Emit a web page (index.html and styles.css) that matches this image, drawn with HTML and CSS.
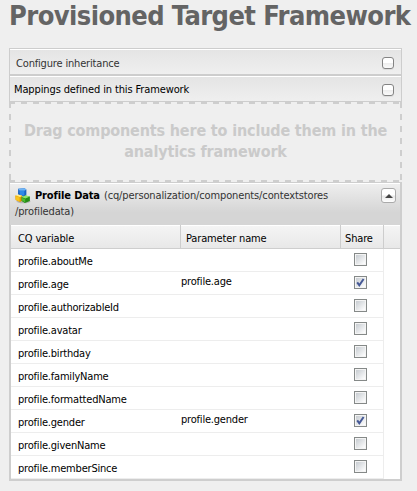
FILE: index.html
```html
<!DOCTYPE html>
<html lang="en">
<head>
<meta charset="utf-8">
<title>Provisioned Target Framework</title>
<link rel="stylesheet" href="styles.css">
</head>
<body>
<h1>Provisioned Target Framework</h1>
<main class="stack">
  <section class="bar inherit"><span>Configure inheritance</span><i class="toggle"></i></section>
  <section class="bar mappings"><span>Mappings defined in this Framework</span><i class="toggle"></i></section>
  <section class="drop">
    <svg class="dashes" width="393" height="80" fill="none" stroke="#cecece" stroke-width="2">
      <path d="M0 1H393" stroke-dasharray="6 6"/>
      <path d="M0 79H393" stroke-dasharray="6 6"/>
      <path d="M1 0V80M392 0V80" stroke-dasharray="6 6"/>
    </svg>
    <p>Drag components here to include them in the<br>analytics framework</p>
  </section>
  <section class="panel">
    <header>
      <svg class="cubes" width="16" height="16" viewBox="0 0 16 16">
        <ellipse cx="8.5" cy="13.3" rx="7" ry="2" fill="#999" opacity=".6"/>
        <path d="M3.2.8 9.5.3l1.9 1.1v5.4L9.8 8H5L3 6z" fill="#1763c4"/>
        <path d="M3.2.8 9.5.3l1.9 1.1-2 1.3H4.7z" fill="#70b5f6"/>
        <path d="M4.4 2.7h5v4.9H5z" fill="#2f8ae8"/>
        <path d="M.3 7.4 4 6.7l3.2 1v5L5 13.9.6 12z" fill="#e39a05"/>
        <path d="M.3 7.4 4 6.7l3.2 1L5 9z" fill="#fff08a"/>
        <path d="M.5 8 4.6 9.2v4.2L.8 11.7z" fill="#f8c51c"/>
        <path d="m6.5 9.1 4-1.5 4.4 1v4.3L9.9 15l-3.3-2.1z" fill="#258c17"/>
        <path d="m6.5 9.1 4-1.5 4.4 1-4.5 2z" fill="#91e469"/>
        <path d="m6.8 9.7 3.4 1.3v3.4l-3.3-2z" fill="#4dba32"/>
      </svg>
      <p><b>Profile Data</b><span>(cq/personalization/components/contextstores</span><br><span class="path2">/profiledata)</span></p>
      <i class="collapse"></i>
    </header>
    <div class="columns"><span>CQ variable</span><span class="c2">Parameter name</span><span class="c3">Share</span></div>
    <div class="rows">
      <div class="row"><span>profile.aboutMe</span><em></em><i class="check"></i></div>
      <div class="row"><span>profile.age</span><em>profile.age</em><i class="check"><svg viewBox="0 0 9 9"><path d="M1.2 4.4 3.3 7.2 7.6 1"/></svg></i></div>
      <div class="row"><span>profile.authorizableId</span><em></em><i class="check"></i></div>
      <div class="row"><span>profile.avatar</span><em></em><i class="check"></i></div>
      <div class="row"><span>profile.birthday</span><em></em><i class="check"></i></div>
      <div class="row"><span>profile.familyName</span><em></em><i class="check"></i></div>
      <div class="row"><span>profile.formattedName</span><em></em><i class="check"></i></div>
      <div class="row"><span>profile.gender</span><em>profile.gender</em><i class="check"><svg viewBox="0 0 9 9"><path d="M1.2 4.4 3.3 7.2 7.6 1"/></svg></i></div>
      <div class="row"><span>profile.givenName</span><em></em><i class="check"></i></div>
      <div class="row"><span>profile.memberSince</span><em></em><i class="check"></i></div>
    </div>
  </section>
</main>
</body>
</html>
```
FILE: styles.css
```css
* { box-sizing: border-box; }
body { margin: 0; width: 417px; height: 491px; overflow: hidden; background: #efefef; color: #000; font: 11px "DejaVu Sans Condensed", "DejaVu Sans", sans-serif; font-stretch: condensed; }
h1 { margin: 0 0 0 9px; height: 48px; font-size: 27px; line-height: 31px; letter-spacing: -.57px; color: #646464; white-space: nowrap; }
.stack { width: 393px; margin-left: 9px; white-space: nowrap; }
.bar { display: flex; justify-content: space-between; border: 1px solid #cdcdcd; box-shadow: inset 0 1px #fff; background: linear-gradient(#e4e4e4, #efefef); padding: 0 6px; }
.inherit { height: 28px; border-bottom-width: 2px; color: #333; line-height: 29px; letter-spacing: -.17px; }
.mappings { height: 26px; border-top: 0; padding-left: 4px; line-height: 28px; letter-spacing: -.12px; }
.toggle { width: 12px; height: 12px; margin: 8px 1px 0; border: 1px solid #848484; border-radius: 3px; background: linear-gradient(#fff 45%, #eee 55%, #fafafa); box-shadow: 0 1px #ddd; }
.drop { position: relative; height: 80px; padding-top: 18px; text-align: center; color: #cacaca; font-size: 16px; font-weight: bold; line-height: 21px; letter-spacing: -.16px; }
.dashes { position: absolute; inset: 0; }
p { margin: 0; }
.panel { height: 299px; border: solid #cecece; border-width: 1px 2px 2px 1px; background: #fff; }
header { display: flex; height: 42px; padding: 4px 4px 0 5px; background: linear-gradient(#efefef, #d5d5d5 70%, #d5d5d5); box-shadow: inset 0 1px #fff; color: #333; line-height: 16px; position: relative; }
header p { flex: 1; padding: 1px 0 0 20px; letter-spacing: -.13px; }
.cubes { position: absolute; left: 5px; top: 5px; }
header b { color: #000; margin-right: 4px; }
.path2 { margin-left: -20px; }
.collapse { width: 15px; height: 15px; margin-top: 1px; border: 1px solid #aaa; border-radius: 3px; background: linear-gradient(#fff 45%, #e8e8e8 55%, #fff); display: grid; place-items: center; }
.collapse::after { content: ""; border: solid transparent; border-width: 0 4px 4px; border-bottom-color: #444; }
.columns { display: grid; grid-template-columns: 170px 160px 43px 1fr; height: 24px; border: solid #cecece; border-width: 0 0 1px 1px; box-shadow: inset 0 1px #fff; background: linear-gradient(#f5f5f5, #e8e8e8); line-height: 19px; letter-spacing: -.15px; }
.columns span { height: 23px; padding: 4px 0 0 7px; border-right: 1px solid #cdcdcd; }
.columns .c2 { padding-left: 5px; }
.columns .c3 { padding-left: 4px; }
.rows { width: 374px; border-left: 1px solid #cecece; }
.row { display: grid; grid-template-columns: 170px 159px 43px; height: 23px; border: solid #ededed; border-width: 0 1px 1px 0; letter-spacing: -.2px; }
.row span { padding-left: 7px; line-height: 25px; }
.row em { font-style: normal; line-height: 19px; }
.check { width: 13px; height: 13px; margin: 4px 0 0 14px; border: 1px solid #858988; background: linear-gradient(135deg, #c7ccd1, #fff) center / 9px 9px no-repeat, #f4f4f4; display: grid; place-items: center; }
.check svg { width: 9px; height: 9px; fill: none; stroke: #465996; stroke-width: 2; }
```
